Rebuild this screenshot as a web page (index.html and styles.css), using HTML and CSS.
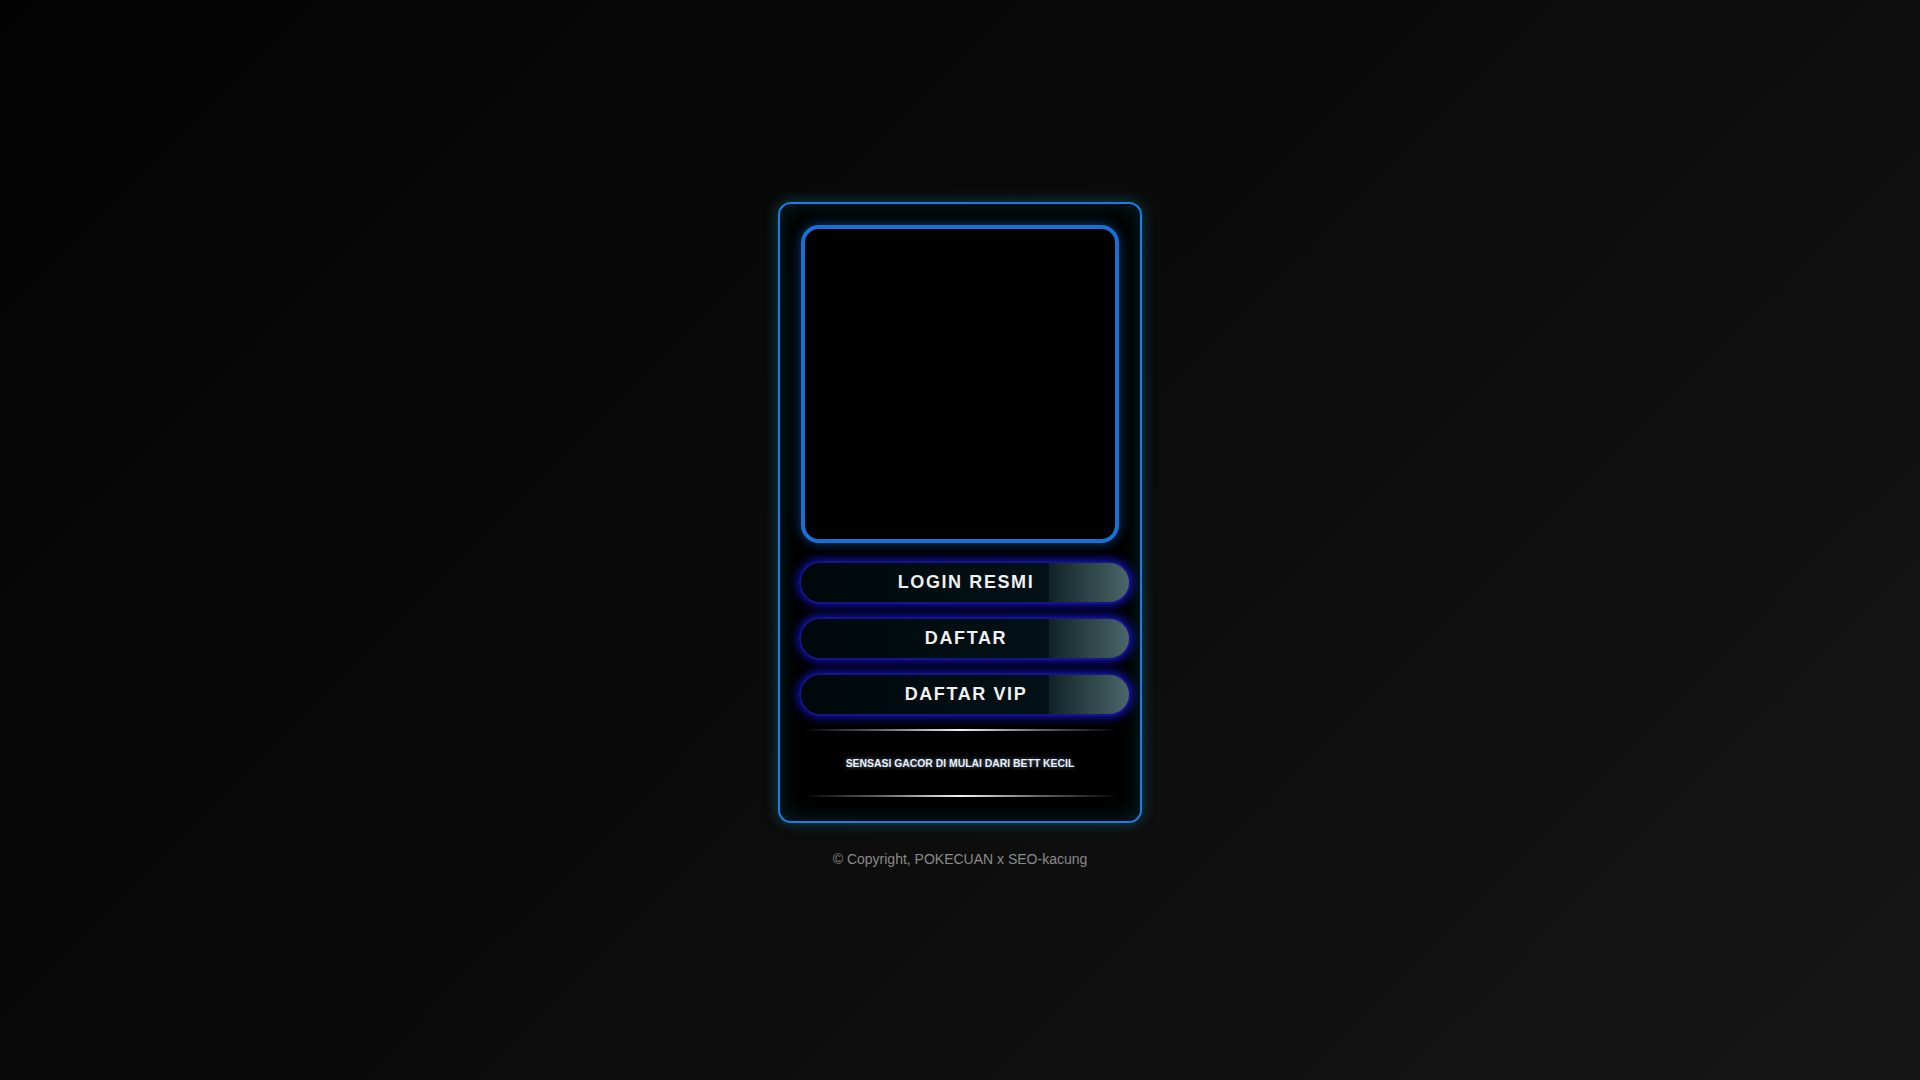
FILE: index.html
```html
<!DOCTYPE html>
<html lang="id">
<head>
<meta charset="utf-8">
<title>POKECUAN</title>
<link rel="stylesheet" href="styles.css">
</head>
<body>
<main class="page">
  <section class="card">
    <div class="banner"></div>
    <nav class="buttons">
      <a class="btn" href="#"><span class="btn-label">LOGIN RESMI</span></a>
      <a class="btn" href="#"><span class="btn-label">DAFTAR</span></a>
      <a class="btn" href="#"><span class="btn-label">DAFTAR VIP</span></a>
    </nav>
    <div class="divider"></div>
    <p class="tagline">SENSASI GACOR DI MULAI DARI BETT KECIL</p>
    <div class="divider"></div>
  </section>
  <footer class="footer">© Copyright, POKECUAN x SEO-kacung</footer>
</main>
</body>
</html>
```

FILE: styles.css
```css
* { box-sizing: border-box; }
html, body { margin: 0; padding: 0; }
body {
  min-height: 100vh;
  background: linear-gradient(135deg, #030303 0%, #0b0b0b 50%, #161616 100%);
  font-family: "Liberation Sans", Arial, sans-serif;
}
.page {
  min-height: 100vh;
  display: flex;
  flex-direction: column;
  align-items: center;
  padding-top: 202px;
}
.card {
  width: 364px;
  height: 621px;
  border: 2px solid #1a7ee8;
  border-radius: 13px;
  background: #000;
  box-shadow: 0 0 14px rgba(20, 140, 170, 0.45), inset 0 0 22px rgba(20, 90, 110, 0.4);
  padding: 21px 0 0 0;
  display: flex;
  flex-direction: column;
}
.banner {
  width: 318px;
  height: 318px;
  margin: 0 auto;
  border: 4px solid #1a6ed6;
  border-radius: 18px;
  background: #000;
  box-shadow: 0 0 12px rgba(20, 120, 220, 0.55);
}
.buttons {
  display: flex;
  flex-direction: column;
  gap: 13px;
  margin: 18px 9px 0 19px;
}
.btn {
  position: relative;
  display: flex;
  align-items: center;
  justify-content: center;
  height: 43px;
  border: 2px solid #14148c;
  border-radius: 22px;
  background: linear-gradient(90deg, #01080b 0%, #021014 68%, #0e2226 75%, #2e4549 88%, #4c6669 100%);
  box-shadow: 0 0 9px 2px rgba(20, 20, 220, 0.8);
  text-decoration: none;
  overflow: hidden;
}
.btn::after {
  content: "";
  position: absolute;
  top: 0; bottom: 0; left: 0;
  width: 248px;
  background: linear-gradient(90deg, #01080b, #021217);
}
.btn-label {
  position: relative;
  z-index: 1;
  color: #f0f0f0;
  font-weight: bold;
  font-size: 18px;
  letter-spacing: 1.6px;
  margin-left: 2px;
}
.divider {
  width: 315px;
  height: 2px;
  margin: 13px auto 0 auto;
  background: linear-gradient(90deg, rgba(255,255,255,0) 0%, rgba(170,170,170,0.6) 25%, #f2f2f2 50%, rgba(170,170,170,0.6) 75%, rgba(255,255,255,0) 100%);
}
.tagline {
  margin: 26px 0 25px 0;
  text-align: center;
  color: #eaf2fa;
  font-size: 10.4px;
  font-weight: bold;
  line-height: 13px;
  text-shadow: 0 0 4px rgba(180, 210, 255, 0.6);
}
.tagline + .divider { margin-top: 0; }
.footer {
  margin-top: 27px;
  color: #8a8a8a;
  font-size: 14px;
  line-height: 18px;
}
```
